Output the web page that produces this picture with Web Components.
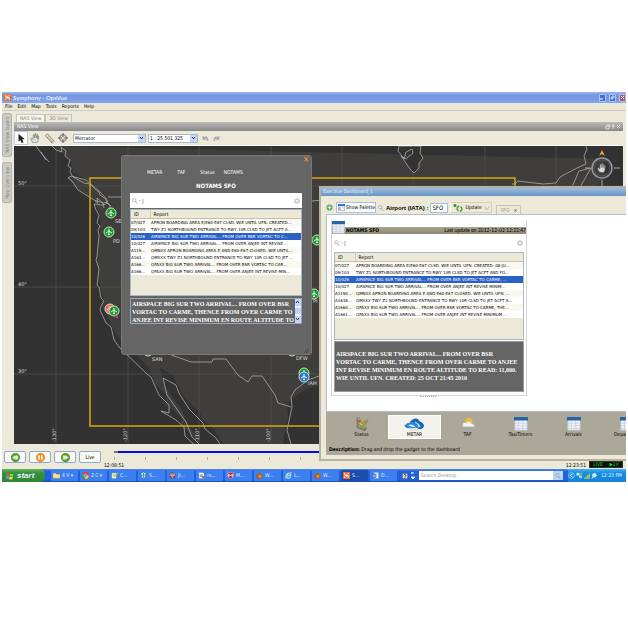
<!DOCTYPE html>
<html lang="en">
<head>
<meta charset="utf-8">
<title>Symphony - OpsVue</title>
<style>
body{margin:0;padding:92px 2px 0;background:#fff;font:5px/7px "DejaVu Sans Condensed","DejaVu Sans",sans-serif;color:#000}
</style>
</head>
<body>
<ops-window></ops-window>
<script>
const RESET = `*{box-sizing:border-box}button,input,select{font:inherit;color:inherit;margin:0;padding:0;border:0;background:none;border-radius:0;min-width:0}svg{display:block;flex:none}a{color:inherit;text-decoration:none}`;
function define(name, css, html) {
  customElements.define(name, class extends HTMLElement {
    constructor() {
      super();
      const t = document.createElement('template');
      t.innerHTML = `<style>${RESET}${css}</style>` + (typeof html === 'function' ? html(this) : html);
      this.attachShadow({mode: 'open'}).append(t.content.cloneNode(true));
    }
  });
}
const ICONS = {
  symphony: '<rect width="16" height="16" fill="#ee6a2c"/><path d="M4 2v6h3M12 14V8H9M4 11v3M12 2v3M7 5v6M9 5v6" stroke="#fff" stroke-width="2" fill="none"/>',
  pointer: '<path d="M4 1v13l3-3 2 5 3-1-2-5h4z" fill="#222"/>',
  hand: '<path d="M4 15 1 9l1-1 3 2V3l1-1 1 1v5l1-7h1l1 7 1-6h1v7l1-4h1l-1 7-2 4z" fill="#ddd" stroke="#777"/>',
  ruler: '<path d="m2 4 3-3 10 11-3 3zM5 7l2-2M8 10l2-2M10 13l2-2" fill="#ddd5c7" stroke="#776e66"/>',
  target: '<circle cx="8" cy="8" r="5.5" fill="none" stroke="#666" stroke-width="1.5"/><circle cx="8" cy="8" r="2.5" fill="none" stroke="#777"/><path d="M8 0v5M8 11v5M0 8h5M11 8h5" stroke="#555" stroke-width="1.5"/>',
  undo: '<path d="M2 3v7h7L6 7q5-3 6 6h2Q14 1 5 5z" fill="#aaa" stroke="#999"/>',
  redo: '<path d="M14 3v7H7l3-3q-5-3-6 6H2Q2 1 11 5z" fill="#aaa" stroke="#999"/>',
  search: '<circle cx="6" cy="6" r="4.5" fill="none" stroke="#999" stroke-width="1.6"/><path d="m9 9 5 6" stroke="#888" stroke-width="2"/>',
  clear: '<circle cx="8" cy="8" r="7.5" fill="#ccc"/><path d="m5 5 6 6M11 5l-6 6" stroke="#fff" stroke-width="2"/>',
  plus: '<circle cx="8" cy="8" r="7" fill="#5baf65" stroke="#8bc792"/><path d="M8 4v8M4 8h8" stroke="#e5f7e4" stroke-width="2.5"/>',
  palette: '<rect x=".5" y=".5" width="15" height="15" fill="#fff" stroke="#69a"/><rect width="16" height="5" fill="#267be0"/><rect x="2" y="7" width="4" height="7" fill="#e69c4c"/><path d="M8 8h6M8 11h6M8 14h6" stroke="#9bf"/>',
  update: '<circle cx="2" cy="3" r="3" fill="#279427"/><path d="M10 4q-7 4-1 10M12 15q7-4 1-10" stroke="#4ba53a" stroke-width="3" fill="none"/>',
  chevron: '<path d="m2 4 6 8 6-8" fill="none" stroke="#aaa69c" stroke-width="2"/>',
  sheet: '<rect x="1" y="1" width="14" height="14" fill="#f2f4f8" stroke="#bdc5d0"/><path d="M1 7h14M1 10h14M1 13h14M5 4v11M10 4v11" stroke="#bcc6d7" stroke-width=".7"/><rect width="16" height="4" fill="#2863a8"/>',
  status: '<path d="M2 1h3l3 7 5-5 2 1-5 9H4z" fill="#d6b95b" stroke="#887d63"/><path d="M3 2v10l8 3 2-3" stroke="#777" stroke-width="2" fill="none"/><path d="m4 8 4 4 5-8" stroke="#7d9c35" stroke-width="2" fill="none"/><circle cx="5" cy="5" r="1.5" fill="#d75726"/>',
  metar: '<path d="M6 6q3-5 8-4 2 1 3 3 4 1 5 5-1 4-6 4l-4-3z" fill="#1668b8"/><path d="m12 5 4 3 2 3-3 1-3-3-3-1z" fill="#b9dcf6"/><path d="M0 10q2-3 5-3 3-4 7 0 4 2 2 4-3 2-12 1-2-1-2-2z" fill="#278bdc" stroke="#0c5bad" stroke-width=".7"/><path d="M4 10q2-2 5-1l3 2q-4 1-8-1z" fill="#e9f5ff"/><path d="M6 15h10" stroke="#c5d3dc"/>',
  taf: '<circle cx="9" cy="5" r="4" fill="#f3bb32"/><path d="M2 9q0-4 4-2 3-4 6 1 4 0 3 3H4q-3 0-2-2z" fill="#f3f3ef" stroke="#c6c7c4" stroke-width=".6"/><path d="m6 12-2 4m6-4-2 4m6-4-2 4" stroke="#86b3cf"/>',
  folder: '<path d="M0 3h6l2 2h8v9H0z" fill="#ffe291" stroke="#bb9b35"/>',
  chrome: '<circle cx="8" cy="8" r="8" fill="#e33"/><path d="M8 8 1 4a8 8 0 0 0 6 12z" fill="#3a4"/><path d="M8 8h8a8 8 0 0 1-9 8z" fill="#fc3"/><circle cx="8" cy="8" r="3.5" fill="#48f" stroke="#fff"/>',
  notepad: '<path d="M2 2h10v13H2z" fill="#eef9e0" stroke="#7a6"/><path d="m6 10 8-9 2 2-8 9z" fill="#db4"/><path d="M4 5h5M4 8h3" stroke="#5a5"/>',
  shield: '<path d="m8 0 6 3q0 9-6 13Q2 12 2 3z" fill="#dce9f6" stroke="#345"/><path d="M8 2v12M3 7h10" stroke="#38b" stroke-width="2"/>',
  gem: '<circle cx="8" cy="8" r="7" fill="#653e83"/><path d="M3 4h10L8 14zM1 8h14" fill="#d97b46" stroke="#ecb"/>',
  paper: '<path d="M2 1h9l3 3v11H2z" fill="#fff" stroke="#779"/><path d="M4 7h7M4 10h6" stroke="#27b" stroke-width="2"/><circle cx="12" cy="12" r="3" fill="#b65"/>',
  mcafee: '<path d="m8 0 7 3-1 8-6 5-6-5-1-8z" fill="#bd2430" stroke="#eee"/><path d="M4 11V5l4 4 4-4v6" fill="none" stroke="#fff" stroke-width="2"/>',
  fox: '<circle cx="8" cy="9" r="7" fill="#ce4829"/><path d="m3 2 5 4 6-5-2 9H5z" fill="#61992c"/><circle cx="9" cy="10" r="3" fill="#dca339"/>',
  ie: '<path d="M13 11q-5 6-9 1-3-7 3-9 7-1 6 5H4" fill="none" stroke="#93dcff" stroke-width="3"/><path d="M1 15Q1 5 15 1" stroke="#f3ca52" fill="none" stroke-width="2"/>',
  word: '<path d="M4 1h11v14H4z" fill="#eef" stroke="#89c"/><path d="M0 4h10v9H0z" fill="#356ac1"/><path d="m2 6 1 5 2-4 2 4 1-5" stroke="#fff" fill="none"/>',
  help: '<path d="M1 1h14v14H1z" fill="#e9e4c8" stroke="#222"/><path d="M5 5q4-4 6 0 0 2-3 3v2m0 1v2" fill="none" stroke="#224" stroke-width="2"/>',
  windows: '<path d="M1 3q3-2 6 0L6 8Q3 6 0 8z" fill="#e95a2e"/><path d="M8 3q3 2 7 0l-1 5q-4 2-7 0z" fill="#7bd444"/><path d="M0 9q3-2 6 0l-1 5q-3-2-6 0z" fill="#53a5f0"/><path d="M7 9q3 2 7 0l-1 5q-4 2-7 0z" fill="#fbd33c"/>',
  back: '<circle cx="8" cy="8" r="7.5" fill="#58a02e" stroke="#39741c"/><path d="M3 8l4-3v6zM8 5h4v6H8z" fill="#dff0d2" stroke="#fff" stroke-width=".7"/>',
  pause: '<circle cx="8" cy="8" r="7.5" fill="#f59421" stroke="#ce7210"/><path d="M5.5 4v8m5-8v8" stroke="#fff" stroke-width="2.5"/>',
  fwd: '<circle cx="8" cy="8" r="7.5" fill="#58a02e" stroke="#39741c"/><path d="M13 8 9 5v6zM4 5h4v6H4z" fill="#dff0d2" stroke="#fff" stroke-width=".7"/>',
  tray: '<circle cx="8" cy="8" r="7" fill="#319be5" stroke="#b5e3ff"/><path d="M10 4 6 8l4 4" stroke="#fff" stroke-width="2" fill="none"/>',
  net: '<rect x="1" y="2" width="7" height="6" fill="#cfe7fa"/><rect x="7" y="8" width="7" height="6" fill="#9ed0ef"/><circle cx="12" cy="4" r="3" fill="#6cc258"/>',
  signal: '<path d="M2 15v-3m4 3V9m4 6V5m4 10V1" stroke="#d6cf38" stroke-width="3"/>',
  lens: '<circle cx="9" cy="6" r="5" fill="#cfeaff" stroke="#fff" stroke-width="1.5"/><path d="m6 10-4 5" stroke="#fff" stroke-width="2.5"/>'
};
const icon = (n, s = 7, w = s) => `<svg width="${w}" height="${s}" viewBox="0 0 ${n === 'metar' ? 22 : 16} 16" aria-hidden="true">${ICONS[n]}</svg>`;

define('title-bar', `
:host{display:flex;align-items:center;height:11px;padding:0 0 0 2px;gap:2px;background:linear-gradient(#9ab8f2,#7895df 30%,#7b9be5 70%,#86a8ee);color:#e2ebfc;font:bold 6px/8px Lato,sans-serif}
.t{flex:1}button{width:7px;height:8px;border:1px solid #afc4f5;border-radius:1px;background:#3f6fdd;display:grid;place-items:center}.c{background:#bd5263}.b{display:flex;gap:3px}`,
`${icon('symphony')}<span class="t"><slot></slot></span><div class="b">
<button aria-label="Minimize"><svg width="5" height="5"><path d="M0 4h3" stroke="#fff"/></svg></button>
<button aria-label="Restore"><svg width="5" height="5"><path d="M2 1h2v2M1 2h2v2H1z" stroke="#fff" fill="none" stroke-width=".7"/></svg></button>
<button class="c" aria-label="Close"><svg width="5" height="5"><path d="m1 1 3 3M4 1 1 4" stroke="#fff"/></svg></button></div>`);

define('menu-bar', `:host{display:flex;gap:5px;height:8px;padding:0 3px;background:#ece9d8;border-bottom:1px solid #cfcdc3}button{line-height:7px}`,
['File','Edit','Map','Tools','Reports','Help'].map(x => `<button>${x}</button>`).join(''));

define('side-tabs', `:host{display:flex;flex-direction:column;gap:5px;width:12px;background:#ece9d8;padding-top:2px;flex:none}
button{width:10px;height:44px;background:#cbcac4;border:1px solid #b7b5ab;border-radius:2px;color:#85847e;writing-mode:vertical-rl;transform:rotate(180deg);line-height:8px;white-space:nowrap}button+button{height:41px}`,
`<button>NAS View layers</button><button>Map Overview</button>`);

define('map-toolbar', `:host{display:flex;align-items:center;height:15px;background:#ece9d8;border-bottom:1px solid #fff}
.tool{width:14px;height:14px;display:grid;place-items:center}.on{background:#fff;border:1px solid #bccbdd}
.s{position:relative;display:flex;height:9px;border:1px solid #a9bad0;background:#fff;margin-left:3px}
.s select{appearance:none;width:100%;padding:0 9px 0 1px;line-height:7px}.s svg{position:absolute;right:0;top:0;background:#c6d6fb}
.w{width:73px}.n{width:50px;margin-left:2px}.h{gap:4px;display:flex;margin-left:4px}`,
`<button class="tool on" aria-label="Select">${icon('pointer',10)}</button><button class="tool" aria-label="Pan">${icon('hand',10)}</button><button class="tool" aria-label="Measure">${icon('ruler',11)}</button><button class="tool" aria-label="Center">${icon('target',10)}</button>
<div class="s w"><select aria-label="Projection"><option>Mercator</option></select><svg width="7" height="7"><path d="m2 2 1.500 2L5 2" stroke="#345" fill="none"/></svg></div>
<div class="s n"><select aria-label="Scale"><option>1 : 25,501,325</option></select><svg width="7" height="7"><path d="m2 2 1.500 2L5 2" stroke="#345" fill="none"/></svg></div>
<div class="h"><button aria-label="Undo">${icon('undo')}</button><button aria-label="Redo">${icon('redo')}</button></div>`);

const plane = (x, y, c = '#1c9a2b', r = 5) => `<g transform="translate(${x} ${y})"><circle r="${r}" fill="${c}" stroke="#c9d8c8"/><path d="M0-3v6M-3 1l3-2 3 2M-1 3l1-1 1 1" stroke="#fff" stroke-width=".9" fill="none"/></g>`;
define('nas-map', `:host{display:block;height:298px;background:#323232;overflow:hidden}svg{width:100%;height:100%}text{font:5px "DejaVu Sans",sans-serif;fill:#ddd}.l{fill:#403e3c}.c{fill:none;stroke:#aaa;stroke-width:.8;stroke-linejoin:round}.o{fill:#323232;stroke:#aaa;stroke-width:.8}`,
`<svg viewBox="14 146 609 298" preserveAspectRatio="xMinYMin slice" role="img" aria-label="North America map">
<path class="l" d="M52 146l10 6 8 8 3 12 17 10 18 16 3 8-16-3 5 12v12l-3 30 2 26 5 17-3 3 6 13 8 17 33 34 8 18 10 10v8l-8-2 15 9 8 7 1 9 14 13 3-2-10-10-6-15-19-27-4-17 13 7 3 8 10 16 14 14 2 6 11 9 18 27h56l-4-15 5-23-1-10 4-7 13-10 11-4 200-4 60-180 20-16 11-8-2-10 2-9z"/>
<path class="l" d="m68 178 3-2 15 4 18 16 4 7-14-3-16-10z"/>
<g stroke="#555" stroke-width=".7"><path d="M56 146v298M128 146v298M199 146v298M271 146v298M342 146v298M413 146v298M485 146v298M556 146v298M14 186h609M14 287h609M14 374h609"/></g>
<path class="c" d="M36 146q5 8 13 16m-8-10 5 8M52 146l4 4 6 2-1-5 5 4-1 5 5 4-2 6 3 2-1 4 3 5 11 6 6 1 5 5 4 3 1 3 6 4 1 4 3 3v4m-15-9 3 2-1-5 6 5 1 5M68 178l3-2 15 4 12 10 8 8 2 4-5 1-9-3-16-10-6-9zM111 206l-3-3-5 2-9-1 2 6 3 5-2 8 3 3-2 4 1 6-2 20-1 4 3 9-2 16 2 2 2 11 3 3-3 5-1 4 6 13 5 4 3 13 6 8 27 26 4 3 8 18 10 10v8l-8-2 15 9 8 7 1 9 14 13 3-2-10-10-6-15-19-27-4-17 13 7 3 8 10 16 14 14 2 6 11 9 16 24M108 197h13M166 353l25 9 21 0 1-3h13l12 16 10 7 4-6h10l13 19 3 8 13 4M291 444l-4-14 5-23-1-10 4-7 13-10 11-4M312 201l10-1M512 184h3l3-3 25 3 13-1 4-6 17-9 9-4-2-8 3-7-2-5M572 187l7-16 12-3-8 14-3 5"/>
<path class="o" d="m399 146-1 5 4 5 2 3 2-7 6-3 1 4-7 6-5-3 9 13 4 4 5-5v-5l4-5-3-5 1-7z"/>
<path d="M90 178h425v248H90z" fill="none" stroke="#d9a812" stroke-width="1.500"/>
<text x="18" y="185">50°</text><text x="18" y="286">40°</text><text x="18" y="373">30°</text>
<text transform="translate(56 442) rotate(-90)">-130°</text><text transform="translate(127 442) rotate(-90)">-120°</text><text transform="translate(199 442) rotate(-90)">-110°</text><text transform="translate(270 442) rotate(-90)">-100°</text>
${plane(111,213)}${plane(109,232)}${plane(110,309,'#ed665d')}${plane(114,311)}${plane(148,351)}${plane(292,351)}${plane(304,373)}${plane(304,377,'#2877dd')}${plane(317,240)}${plane(314,294)}
<text x="115" y="223">SE</text><text x="113" y="243">PD</text><text x="115" y="318" style="fill:#f66">S</text><text x="152" y="361">SAN</text><text x="296" y="360">DFW</text><text x="308" y="385">IAH</text><text x="313" y="303">PI</text>
<g fill="none" stroke="#aaa"><circle cx="602" cy="168" r="10" stroke-width="1.500" stroke="#999"/><circle cx="602" cy="168" r="8" stroke="#555"/><path d="M614 168h6M602 180v6M590 168h-5"/></g><path d="m599 156 3-6 3 6-3-2z" fill="#eca53a"/><g transform="translate(597 163) scale(.6)">${ICONS.hand}</g>
</svg>`);

const ROWS = {
 popup: [['07/027','APRON BOARDING AREA E/E60-E67 CLSD. WIE UNTIL UFN. CREATED...'],['09/103','TWY Z1 NORTHBOUND ENTRANCE TO RWY 10R CLSD TO JET ACFT A...'],['10/026','AIRSPACE BIG SUR TWO ARRIVAL... FROM OVER BSR VORTAC TO C...'],['10/027','AIRSPACE BIG SUR TWO ARRIVAL... FROM OVER ANJEE INT REVISE ...'],['A119...','QMNXX APRON BOARDING AREA E AND E60-E67 CLOSED. WIE UNTIL...'],['A163...','QMXXX TWY Z1 NORTHBOUND ENTRANCE TO RWY 10R CLSD TO JET ...'],['A166...','QPAXX BIG SUR TWO ARRIVAL... FROM OVER BSR VORTAC TO CAR...'],['A166...','QPAXX BIG SUR TWO ARRIVAL... FROM OVER ANJEE INT REVISE MIN...']],
 dash: [['07/027','APRON BOARDING AREA E/E60-E67 CLSD. WIE UNTIL UFN. CREATED: 08 JU...'],['09/103','TWY Z1 NORTHBOUND ENTRANCE TO RWY 10R CLSD TO JET ACFT AND FO...'],['10/026','AIRSPACE BIG SUR TWO ARRIVAL... FROM OVER BSR VORTAC TO CARME, ...'],['10/027','AIRSPACE BIG SUR TWO ARRIVAL... FROM OVER ANJEE INT REVISE MINIM...'],['A1190...','QMNXX APRON BOARDING AREA E AND E60-E67 CLOSED. WIE UNTIL UFN. ...'],['A1638...','QMXXX TWY Z1 NORTHBOUND ENTRANCE TO RWY 10R CLSD TO JET ACFT A...'],['A1660...','QPAXX BIG SUR TWO ARRIVAL... FROM OVER BSR VORTAC TO CARME, THE...'],['A1661...','QPAXX BIG SUR TWO ARRIVAL... FROM OVER ANJEE INT REVISE MINIMUM ...']]
};
class NotamTable extends HTMLElement {
  connectedCallback() {
    const r = this.attachShadow({mode: 'open'});
    r.innerHTML = `<style>${RESET}:host{display:block;background:#ece9d8;border:1px solid #a9b8c4;color:#000;font:4px/7px "DejaVu Sans",sans-serif}
table{width:100%;border-collapse:collapse;table-layout:fixed}th{font:5px/7px "DejaVu Sans Condensed","DejaVu Sans",sans-serif;text-align:left;padding:1px 3px 0;height:8px;border-bottom:1px solid #c4c0ae}th+th{border-left:1px solid #cfcbb9}th:first-child{width:var(--id,19px)}td{padding:0;height:7px;white-space:nowrap;overflow:hidden}
td+td{padding-left:1px}tbody tr{background:#fff}tbody tr:nth-child(odd){background:#faf8f0}tbody tr.on{background:#2b61c5;color:#fff}</style>
<table><thead><tr><th>ID</th><th>Report</th></tr></thead><tbody>${ROWS[this.getAttribute('data')].map((x, i) => `<tr${i === 2 ? ' class="on"' : ''}><td>${x[0]}</td><td>${x[1]}</td></tr>`).join('')}</tbody></table>`;
  }
}
customElements.define('notam-table', NotamTable);

define('search-field', `:host{display:flex;align-items:center;gap:1px;padding:0 2px;background:#fff;color:#333}input{flex:1;line-height:7px;height:8px}`,
 e => `${icon('search',6)}<span>-</span><input aria-label="Filter reports" value="]">${icon('clear',6)}`);

define('notam-popup', `:host{display:block;background:#656565;border:1px solid #777;border-radius:3px;padding:12px 9px 30px 8px;color:#fff}
nav{display:flex;gap:15px;padding-left:17px;height:8px}nav button:last-child{margin-left:-6px}
h2{margin:6px 0 3px;font:bold 6px/8px "DejaVu Sans Condensed","DejaVu Sans",sans-serif;text-align:center}
.x{position:absolute;right:2px;top:0;color:#ef8b22;font-size:8px;line-height:7px;font-weight:bold}
search-field{height:15px;margin-bottom:1px}notam-table{height:87px}
.d{display:flex;height:26px;margin-top:2px;border:1px solid #9aa6b8;overflow:hidden}p{flex:1;margin:0;padding:1px 1px 0;font:bold 6px/8px "Liberation Serif",serif;white-space:nowrap}
.sb{display:flex;flex-direction:column;width:7px;justify-content:space-between;background:#eef1fb}.sb button{height:7px;background:#c4d3f9;color:#345;display:grid;place-items:center}.sb i{height:6px;background:#bdcffb}
.g{position:absolute;right:2px;bottom:1px}`,
`<button class="x" aria-label="Close">×</button><nav><button>METAR</button><button>TAF</button><button>Status</button><button>NOTAMS</button></nav><h2>NOTAMS SFO</h2><search-field></search-field><notam-table data="popup"></notam-table>
<div class="d"><p>AIRSPACE BIG SUR TWO ARRIVAL... FROM OVER BSR<br>VORTAC TO CARME, THENCE FROM OVER CARME TO<br>ANJEE INT REVISE MINIMUM EN ROUTE ALTITUDE TO</p>
<div class="sb"><button aria-label="Scroll up"><svg width="5" height="5"><path d="m1 3 1.500-2L4 3" fill="none" stroke="#345"/></svg></button><i></i><button aria-label="Scroll down"><svg width="5" height="5"><path d="m1 1 1.500 2L4 1" fill="none" stroke="#345"/></svg></button></div></div><svg class="g" width="5" height="5"><path d="M0 5l5-5M2 5l3-3" stroke="#444" stroke-width=".7"/></svg>`);

define('palette-item', `:host{display:flex;flex:0 0 53px;flex-direction:column}button{display:flex;flex-direction:column;align-items:center;justify-content:space-between;height:24px;padding:2px 0 1px}:host([on]) button{background:#f3f2ec;border:1px solid #fff;padding:1px 0 0}`,
 e => `<button>${icon(e.getAttribute('icon'), 14, e.hasAttribute('on') ? 21 : 14)}<slot></slot></button>`);

define('dash-window', `:host{display:block;background:#ece9d8;border:2px solid #b5b2a1;border-right:0;overflow:hidden}
.t{height:9px;margin:-1px 0 0 -1px;padding-left:3px;background:linear-gradient(#a2c1e0,#6795c5);color:#e3edf8;line-height:9px}
.in{padding:5px 0 4px 5px}.tb{display:flex;align-items:center;height:13px;gap:2px}.tb button{display:flex;align-items:center;gap:2px;height:11px}
.tb .sp{border:1px solid #a9c0e6;background:#f7f9fc;padding:0 1px;margin-left:1px;gap:1px;width:40px;white-space:nowrap}.tb label{font:bold 6px/8px "Liberation Sans",sans-serif;white-space:nowrap}.tb input{width:18px;height:10px;border:1px solid #a4bdd9;background:#fff;padding-left:1px;font-size:6px}
.up{border:1px solid #d4d0bf;border-left-color:#fff;padding:0 2px;width:42px}.tb .tab{align-self:flex-end;border:1px solid #c9c6b5;border-bottom:0;padding:0 3px;color:#999;height:9px;margin-left:2px}.tab b{margin-left:2px;color:#666}
.w{background:#fff;border:1px solid #b2bfc7;border-right:0;height:198px;padding:5px 0 0 4px}
.box{width:196px;max-width:100%;border:1px solid #d5d5ce;border-top:0;padding-bottom:3px}
.hd{display:flex;align-items:flex-end;height:14px}.hd svg{position:relative;z-index:1}.hd div{flex:1;display:flex;justify-content:space-between;background:linear-gradient(#aaa591,#8c8775);height:7px;line-height:7px;margin-left:-13px;padding-left:14px}.hd span{font-family:Lato,sans-serif}
search-field{height:17px;padding:0 3px 0 2px;margin:0 0 1px}notam-table{height:88px;margin:0 2px;--id:20px}
p{margin:1px 2px 0;background:#656565;border:1px solid #999;color:#fff;height:51px;padding:8px 1px;font:bold 6px/8px "Liberation Serif",serif;white-space:nowrap}
.grip{width:16px;border-top:1px dotted #aaa;margin:0 0 0 89px}
.pal{background:#aca899;padding:3px 0 2px;height:43px}.row{display:flex;padding-left:9px;overflow:hidden}.desc{padding:7px 0 0 3px;white-space:nowrap}.desc b{font-size:5px}`,
`<div class="t">ExecVue Dashboard_1</div><div class="in"><div class="tb"><button aria-label="Add">${icon('plus')}</button><button class="sp">${icon('palette')}Show Palette</button>${icon('search',6)}<label for="ap">Airport (IATA) :</label><input id="ap" value="SFO"><button class="up">${icon('update',8,10)}Update ${icon('chevron',6)}</button><button class="tab">SFO <b>×</b></button></div>
<div class="w"><div class="box"><div class="hd">${icon('sheet',13)}<div><b>NOTAMS SFO</b><span>Last update on 2012-12-02 12:22:47</span></div></div><search-field></search-field><notam-table data="dash"></notam-table><p>AIRSPACE BIG SUR TWO ARRIVAL... FROM OVER BSR<br>VORTAC TO CARME, THENCE FROM OVER CARME TO ANJEE<br>INT REVISE MINIMUM EN ROUTE ALTITUDE TO READ: 11,000.<br>WIE UNTIL UFN. CREATED: 25 OCT 21:45 2010</p></div><div class="grip"></div></div>
<div class="pal"><div class="row"><palette-item icon="status">Status</palette-item><palette-item icon="metar" on>METAR</palette-item><palette-item icon="taf">TAF</palette-item><palette-item icon="sheet">TaxiTimers</palette-item><palette-item icon="sheet">Arrivals</palette-item><palette-item icon="sheet">Departures</palette-item></div><div class="desc"><b>Description:</b> Drag and drop the gadget to the dashboard</div></div></div>`);

define('time-bar', `:host{display:flex;height:25px;padding:7px 3px 0 2px;background:#ece9d8;gap:3px}button{width:22px;height:12px;border:1px solid #8caad0;border-radius:2px;background:#faf9f4;display:grid;place-items:center;flex:none}
.tl{flex:1;margin-left:10px;min-width:0}.bar{height:2px;background:linear-gradient(90deg,#777 4px,#0808e6 4px)}.tk{height:7px;margin-top:4px;background:repeating-linear-gradient(90deg,#aaa 0 1px,transparent 1px 31px) 0 0/100% 3px no-repeat}
.lb{display:flex;justify-content:space-between;margin:-2px 0 0 -10px;align-items:center}.r{display:flex;gap:3px;align-items:center}.lv{display:flex;background:#061306;color:#23c431;border:1px solid #333;height:7px;line-height:5px;width:34px;justify-content:space-around;margin-top:-3px}`,
`<button aria-label="Step back">${icon('back',9)}</button><button aria-label="Pause">${icon('pause',9)}</button><button aria-label="Step forward">${icon('fwd',9)}</button><button>Live</button><div class="tl"><div class="bar"></div><div class="tk"></div><div class="lb"><span>12:08:51</span><div class="r"><span>12:23:51</span><span class="lv"><span>LIVE</span><span>▶1X</span></span></div></div></div>`);

const tasks = [['folder','4 V ▾'],['chrome','2 C ▾'],['notepad','C...'],['shield','S...'],['gem','JI...'],['paper','ro...'],['mcafee','M...'],['fox','W...'],['ie','L...'],['fox','W...'],['symphony','S...'],['word','D...']];
define('task-bar', `:host{display:flex;height:13px;background:linear-gradient(#4f8cf4,#245edb 20%,#2260df 80%,#1b49b4);align-items:center;color:#e7f0ff}
.st{width:43px;height:13px;background:linear-gradient(#65b55f,#37923b 30%,#2e8534);border-radius:0 5px 5px 0;display:flex;align-items:center;gap:3px;padding-left:4px;font:italic bold 8px/10px "Liberation Sans",sans-serif;margin-right:6px}
.ts{display:flex;gap:2px}.ts button{width:27px;height:11px;display:flex;align-items:center;gap:2px;padding-left:2px;background:#3c80f0;border-radius:1px;white-space:nowrap;overflow:hidden}.ts .on{background:#1b4dab}
.q{display:flex;gap:3px;margin:0 4px 0 5px;align-items:center}.sr{display:flex;flex:1;height:9px;background:#fff;max-width:144px}.sr input{flex:1;padding-left:2px}.sr input::placeholder{color:#999;opacity:1}.sr button{width:10px;background:#b9d2f7;display:grid;place-items:center}
.tr{margin-left:auto;width:58px;height:13px;background:linear-gradient(#45b2f4,#158fe5 30%,#1583d5);display:flex;align-items:center;gap:1px}.tr span{margin-left:3px;white-space:nowrap}`,
`<button class="st">${icon('windows',8)}start</button><div class="ts">${tasks.map((t, i) => `<button${i === 10 ? ' class="on"' : ''}>${icon(t[0])}${t[1]}</button>`).join('')}</div><div class="q">${icon('help',6)}<svg width="4" height="9"><path d="M0 2h3M1 1v2M0 6h4L2 8z" stroke="#fff" fill="#fff" stroke-width=".8"/></svg></div><div class="sr"><input aria-label="Search Desktop" placeholder="Search Desktop"><button aria-label="Search">${icon('search',6)}</button></div><div class="tr">${icon('tray',7)}${icon('net',7)}${icon('signal',6)}${icon('lens',6)}<span>12:23 PM</span></div>`);

define('ops-window', `:host{display:block;position:relative;background:#ece9d8;overflow:hidden}
.mid{display:flex;height:auto}.main{flex:1;min-width:0;padding-right:3px}.tabs{display:flex;height:11px;align-items:flex-end;padding-left:2px}.tabs button{height:8px;padding:0 3px;border:1px solid #c9c6b7;border-bottom:0;color:#8d8a7e}.tabs button:first-child{background:#f7f6ef}
.nv{display:flex;justify-content:space-between;height:9px;padding:0 3px;line-height:9px;background:linear-gradient(#bbb,#878787);color:#fff}
notam-popup{position:absolute;left:119px;top:63px;width:191px}dash-window{position:absolute;left:317px;right:0;top:94px}`,
`<title-bar>Symphony - OpsVue</title-bar><menu-bar></menu-bar><div class="mid"><side-tabs></side-tabs><div class="main"><div class="tabs"><button>NAS View</button><button>3D View</button></div><div class="nv"><span>NAS View</span><svg width="15" height="9"><path d="M1 4h3v3H1zM2 3h3v2M7 4h3M8 2v5M12 3l3 3M15 3l-3 3" stroke="#eee" fill="none" stroke-width=".8"/></svg></div><map-toolbar></map-toolbar><nas-map></nas-map></div></div><time-bar></time-bar><task-bar></task-bar><notam-popup></notam-popup><dash-window></dash-window>`);
</script>
</body>
</html>
